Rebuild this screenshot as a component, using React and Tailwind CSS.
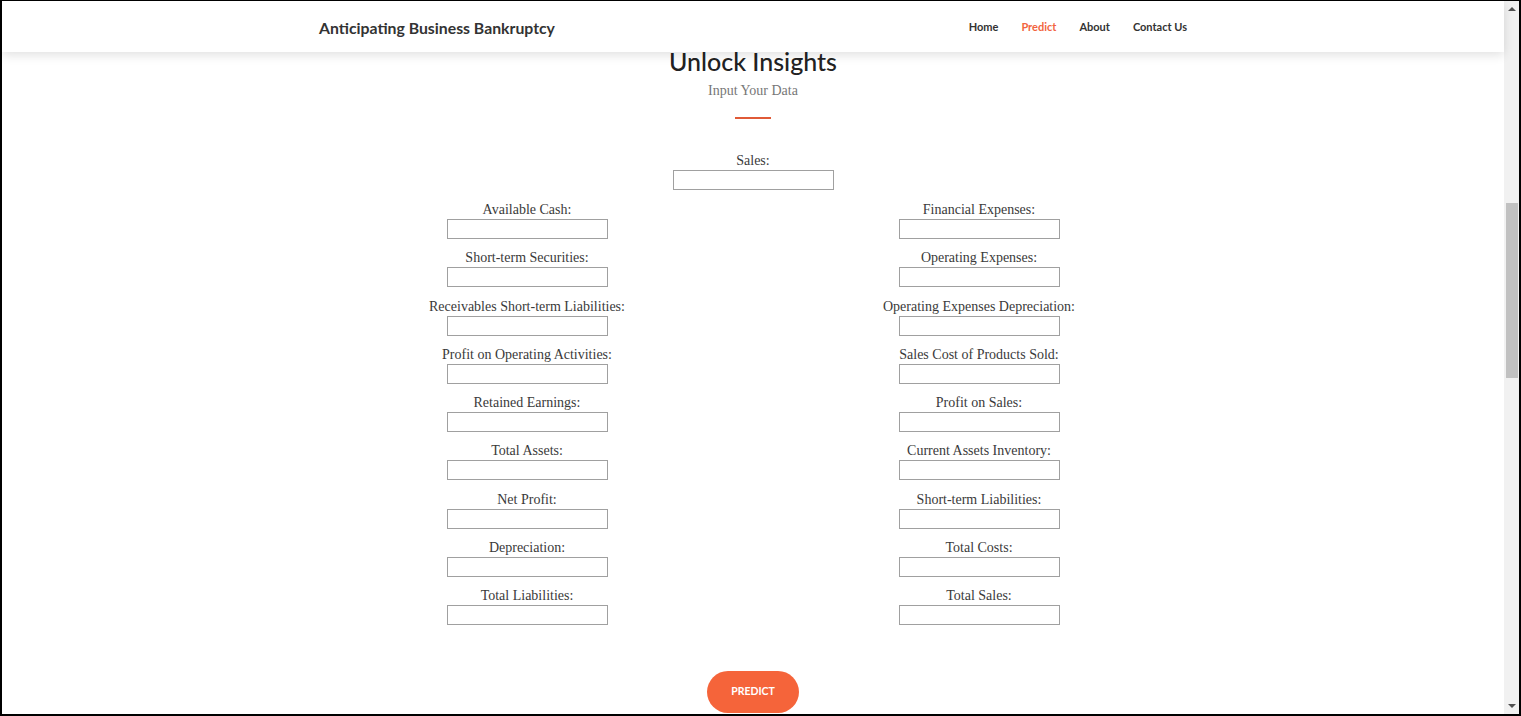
import { useState } from "react";

const leftFields = [
  "Available Cash:",
  "Short-term Securities:",
  "Receivables Short-term Liabilities:",
  "Profit on Operating Activities:",
  "Retained Earnings:",
  "Total Assets:",
  "Net Profit:",
  "Depreciation:",
  "Total Liabilities:",
];

const rightFields = [
  "Financial Expenses:",
  "Operating Expenses:",
  "Operating Expenses Depreciation:",
  "Sales Cost of Products Sold:",
  "Profit on Sales:",
  "Current Assets Inventory:",
  "Short-term Liabilities:",
  "Total Costs:",
  "Total Sales:",
];

function Field({ label, value, onChange }) {
  return (
    <div className="flex flex-col items-center">
      <label className="block text-[14px] leading-[18px] text-[#3a3a3a]">{label}</label>
      <input
        type="text"
        value={value}
        onChange={(e) => onChange(e.target.value)}
        className="h-[20px] w-[161px] border border-[#a0a0a0] bg-white px-1 text-[13px] outline-none"
      />
    </div>
  );
}

function Scrollbar() {
  return (
    <div className="flex w-[15px] shrink-0 flex-col bg-[#f1f1f1]">
      <div className="flex h-[16px] items-center justify-center">
        <div className="h-0 w-0 border-x-[4px] border-b-[4px] border-x-transparent border-b-[#505050]" />
      </div>
      <div className="flex-1">
        <div className="mx-auto mt-[186px] h-[175px] w-[12px] bg-[#c1c1c1]" />
      </div>
      <div className="flex h-[16px] items-center justify-center">
        <div className="h-0 w-0 border-x-[4px] border-t-[4px] border-x-transparent border-t-[#505050]" />
      </div>
    </div>
  );
}

export default function App() {
  const [values, setValues] = useState({});
  const set = (k) => (v) => setValues((old) => ({ ...old, [k]: v }));

  return (
    <div className="flex h-[716px] w-[1521px] overflow-hidden border-t border-r-2 border-b-2 border-l-2 border-black bg-white">
      <div className="relative flex min-w-0 flex-1 flex-col">
        {/* Header */}
        <header className="relative z-10 h-[51px] shrink-0 bg-white shadow-[0_3px_10px_rgba(0,0,0,0.12)]">
          <div className="mx-auto flex h-full w-[868px] items-center justify-between pt-[2px] font-['Lato',sans-serif]">
            <div className="text-[15.8px] font-bold text-[#333]">Anticipating Business Bankruptcy</div>
            <nav className="flex gap-[23px] text-[11px] font-bold text-[#333]">
              <a href="#">Home</a>
              <a href="#" className="text-[#f26440]">Predict</a>
              <a href="#">About</a>
              <a href="#">Contact Us</a>
            </nav>
          </div>
        </header>

        {/* Form */}
        <main className="flex flex-col items-center font-['Liberation_Serif',serif]">
          <h1 className="font-['Lato',sans-serif] text-[25px] font-medium leading-[18px] text-[#222]">
            Unlock Insights
          </h1>
          <p className="mt-[13px] text-[14px] leading-[16px] text-[#777]">Input Your Data</p>
          <div className="mt-[18px] h-[2px] w-[36px] bg-[#e05a37]" />

          <div className="mt-[33px]">
            <Field label="Sales:" value={values.sales || ""} onChange={set("sales")} />
          </div>

          <div className="mt-[11px] grid w-[904px] grid-cols-2">
            <div className="flex flex-col gap-y-[10.25px]">
              {leftFields.map((f) => (
                <Field key={f} label={f} value={values[f] || ""} onChange={set(f)} />
              ))}
            </div>
            <div className="flex flex-col gap-y-[10.25px]">
              {rightFields.map((f) => (
                <Field key={f} label={f} value={values[f] || ""} onChange={set(f)} />
              ))}
            </div>
          </div>

          <button className="mt-[46px] h-[42px] w-[92px] shrink-0 rounded-full bg-[#f5643a] font-['Lato',sans-serif] text-[10.5px] font-bold text-white">
            PREDICT
          </button>
        </main>
      </div>
      <Scrollbar />
    </div>
  );
}
